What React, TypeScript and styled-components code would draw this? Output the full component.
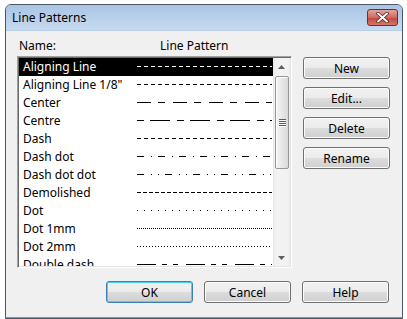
import * as React from 'react';
import styled, { createGlobalStyle } from 'styled-components';

const GlobalStyle = createGlobalStyle`
  body {
    margin: 0;
    background: #ffffff;
    font-family: "Segoe UI", "Noto Sans", sans-serif;
    font-size: 12px;
    color: #000;
  }
`;

type Pattern = {
  name: string,
  dash: string,
};

const patterns: Pattern[] = [
  { name: 'Aligning Line', dash: '4 3' },
  { name: 'Aligning Line 1/8"', dash: '4 3' },
  { name: 'Center', dash: '14 7 7 8' },
  { name: 'Centre', dash: '7 6 20 7' },
  { name: 'Dash', dash: '4 3' },
  { name: 'Dash dot', dash: '7 7 1 6' },
  { name: 'Dash dot dot', dash: '7 7 1 6 1 6' },
  { name: 'Demolished', dash: '4 2' },
  { name: 'Dot', dash: '1 6' },
  { name: 'Dot 1mm', dash: '1 1' },
  { name: 'Dot 2mm', dash: '1 2' },
  { name: 'Double dash', dash: '19 6 5 6 5 8' },
];

const Window = styled.div`
  margin: 4px 0 0 5px;
  width: 398px;
  height: 315px;
  box-sizing: border-box;
  border: 1px solid #4d5866;
  border-radius: 6px 6px 0 0;
  overflow: hidden;
  display: flex;
  flex-direction: column;
  background: #c4d8ee;
`;

const TitleBar = styled.div`
  height: 25px;
  flex: none;
  display: flex;
  align-items: center;
  justify-content: space-between;
  padding: 0 4px 0 6px;
  background: linear-gradient(#a9c5e4, #c6daef);
  border-bottom: 1px solid #b7cde6;
`;

const Title = styled.span`
  font-size: 12px;
  color: #000;
`;

const CloseBox = styled.div`
  width: 31px;
  height: 17px;
  box-sizing: border-box;
  border: 1px solid #7c2a24;
  border-radius: 3px;
  background: linear-gradient(#e2a49d, #cf6a60 50%, #c2463b 51%, #d2786a);
  display: flex;
  align-items: center;
  justify-content: center;
  margin-top: -1px;
`;

const Client = styled.div`
  flex: 1;
  background: #f0f0f0;
  border-bottom: 1px solid #3ab3dc;
  padding: 0 12px 0 11px;
  display: flex;
  flex-direction: column;
`;

const TopRow = styled.div`
  display: flex;
  gap: 11px;
`;

const LeftCol = styled.div`
  width: 275px;
  display: flex;
  flex-direction: column;
`;

const Header = styled.div`
  height: 25px;
  box-sizing: border-box;
  padding-top: 3px;
  display: flex;
  align-items: center;
`;

const HeadLabel = styled.span<{ $w?: number, $pl?: number }>`
  width: ${p => (p.$w ? p.$w + 'px' : 'auto')};
  padding-left: ${p => p.$pl || 0}px;
`;

const ListBox = styled.div`
  height: 212px;
  box-sizing: border-box;
  border-top: 1px solid #a0a0a0;
  border-left: 1px solid #a0a0a0;
  border-right: 1px solid #ffffff;
  border-bottom: 1px solid #ffffff;
  box-shadow: inset 1px 1px 0 #696969, inset -1px -1px 0 #e3e3e3;
  padding: 1px;
  display: flex;
  background: #fff;
  overflow: hidden;
`;

const Rows = styled.div`
  flex: 1;
  display: flex;
  flex-direction: column;
  overflow: hidden;
`;

const Row = styled.div<{ $sel?: boolean }>`
  height: 18px;
  flex: none;
  display: grid;
  grid-template-columns: 118px 136px;
  align-items: center;
  background: ${p => (p.$sel ? '#000' : 'transparent')};
  color: ${p => (p.$sel ? '#fff' : '#000')};
`;

const RowName = styled.span`
  padding-left: 4px;
  white-space: nowrap;
  line-height: 18px;
`;

const ScrollBar = styled.div`
  width: 17px;
  flex: none;
  display: flex;
  flex-direction: column;
  background: linear-gradient(90deg, #e3e3e3, #f2f2f2 2px, #f2f2f2 15px, #ececec);
`;

const Arrow = styled.div`
  height: 17px;
  flex: none;
  display: flex;
  align-items: center;
  justify-content: center;
`;

const Track = styled.div`
  flex: 1;
  padding: 1px 1px 0 2px;
`;

const Thumb = styled.div`
  height: 93px;
  box-sizing: border-box;
  border: 1px solid #979797;
  border-radius: 2px;
  background: linear-gradient(90deg, #f4f4f4, #e8e8e8 50%, #d8d8d8);
  box-shadow: inset 1px 1px 0 #fcfcfc;
  display: flex;
  flex-direction: column;
  align-items: center;
  justify-content: center;
  gap: 1px;
`;

const Grip = styled.div`
  width: 7px;
  height: 1px;
  background: #5c5c5c;
  box-shadow: 0 1px 0 #f8f8f8;
`;

const ButtonCol = styled.div`
  padding-top: 26px;
  display: flex;
  flex-direction: column;
  gap: 8px;
`;

const Button = styled.button<{ $def?: boolean }>`
  width: 87px;
  height: 22px;
  box-sizing: border-box;
  padding: 0;
  font-family: inherit;
  font-size: 12px;
  color: #000;
  border: 1px solid ${p => (p.$def ? '#3c7fb1' : '#707070')};
  border-radius: 3px;
  background: linear-gradient(#f2f2f2, #ebebeb 50%, #dddddd 51%, #cfcfcf);
  box-shadow: inset 0 0 0 1px ${p => (p.$def ? '#48d2f7' : '#fbfbfb')};
`;

const BottomRow = styled.div`
  margin-top: 13px;
  display: flex;
  justify-content: flex-end;
  gap: 11px;
  padding-right: 1px;
`;

function PatternLine({ dash, sel }: { dash: string, sel?: boolean }) {
  return (
    <svg width="136" height="18" style={{ display: 'block' }}>
      <line x1="0" y1="8.5" x2="135" y2="8.5" stroke={sel ? '#fff' : '#000'} strokeWidth="1" strokeDasharray={dash} shapeRendering="crispEdges" />
    </svg>
  );
}

export default function App() {
  return (
    <>
      <GlobalStyle />
      <Window>
        <TitleBar>
          <Title>Line Patterns</Title>
          <CloseBox>
            <svg width="13" height="11" viewBox="0 0 13 11">
              <path d="M2 1.5 L11 9.5 M11 1.5 L2 9.5" stroke="#5a1a14" strokeWidth="3.4" strokeLinecap="round" />
              <path d="M2 1.5 L11 9.5 M11 1.5 L2 9.5" stroke="#ffffff" strokeWidth="2" strokeLinecap="round" />
            </svg>
          </CloseBox>
        </TitleBar>
        <Client>
          <TopRow>
            <LeftCol>
              <Header>
                <HeadLabel $w={141} $pl={2}>Name:</HeadLabel>
                <HeadLabel>Line Pattern</HeadLabel>
              </Header>
              <ListBox>
                <Rows>
                  {patterns.map((p, i) => (
                    <Row key={p.name} $sel={i === 0}>
                      <RowName>{p.name}</RowName>
                      <PatternLine dash={p.dash} sel={i === 0} />
                    </Row>
                  ))}
                </Rows>
                <ScrollBar>
                  <Arrow>
                    <svg width="7" height="4"><path d="M0 4 L3.5 0 L7 4 Z" fill="#5e5e5e" /></svg>
                  </Arrow>
                  <Track>
                    <Thumb>
                      <Grip />
                      <Grip />
                      <Grip />
                      <Grip />
                    </Thumb>
                  </Track>
                  <Arrow>
                    <svg width="7" height="4"><path d="M0 0 L7 0 L3.5 4 Z" fill="#5e5e5e" /></svg>
                  </Arrow>
                </ScrollBar>
              </ListBox>
            </LeftCol>
            <ButtonCol>
              <Button>New</Button>
              <Button>Edit...</Button>
              <Button>Delete</Button>
              <Button>Rename</Button>
            </ButtonCol>
          </TopRow>
          <BottomRow>
            <Button $def>OK</Button>
            <Button>Cancel</Button>
            <Button>Help</Button>
          </BottomRow>
        </Client>
      </Window>
    </>
  );
}
